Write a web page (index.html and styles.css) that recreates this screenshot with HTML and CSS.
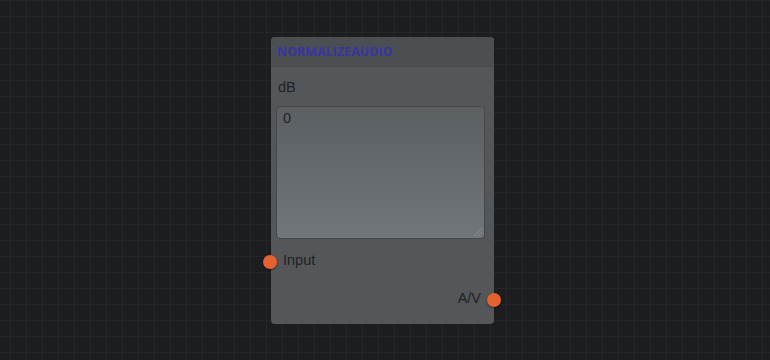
FILE: index.html
```html
<!DOCTYPE html>
<html lang="en">
<head>
  <meta charset="utf-8">
  <title>NormalizeAudio node</title>
  <link rel="stylesheet" href="styles.css">
</head>
<body>
  <div class="canvas">
    <div class="node">
      <div class="node-title">NORMALIZEAUDIO</div>
      <div class="node-body">
        <div class="control">
          <label class="control-label">dB</label>
          <div class="control-input">0</div>
        </div>
        <div class="socket-row socket-in">
          <span class="socket"></span>
          <span class="socket-name">Input</span>
        </div>
        <div class="socket-row socket-out">
          <span class="socket-name">A/V</span>
          <span class="socket"></span>
        </div>
      </div>
    </div>
  </div>
</body>
</html>
```

FILE: styles.css
```css
html, body {
  margin: 0;
  padding: 0;
  height: 100%;
}
body {
  background-color: #1c1d1f;
  font-family: 'Liberation Sans', Arial, sans-serif;
  overflow: hidden;
}
.canvas {
  position: relative;
  width: 770px;
  height: 360px;
  background-color: #1c1d1f;
  background-image:
    linear-gradient(to right, #252629 1px, transparent 1px),
    linear-gradient(to bottom, #252629 1px, transparent 1px);
  background-size: 16px 16px;
  background-position: 10px 0;
}
.node {
  position: absolute;
  left: 271px;
  top: 37px;
  width: 223px;
  height: 287px;
  background: #53575a;
  border-radius: 4px;
  display: flex;
  flex-direction: column;
}
.node-title {
  height: 30px;
  box-sizing: border-box;
  padding: 6px 6px 0;
  background: #4b4f52;
  border-radius: 4px 4px 0 0;
  border-bottom: 1px solid #474b4e;
  color: #3535a6;
  font-family: 'Open Sans', sans-serif;
  font-weight: 700;
  font-size: 12.5px;
}
.node-body {
  flex: 1;
  display: flex;
  flex-direction: column;
}
.control {
  padding: 12px 9px 0 5px;
}
.control-label {
  display: block;
  padding-left: 2px;
  font-size: 14.5px;
  line-height: 16px;
  color: #222;
}
.control-input {
  margin-top: 11px;
  height: 133px;
  box-sizing: border-box;
  padding: 3px 6px;
  border: 1px solid #44484b;
  border-radius: 4px;
  background: linear-gradient(to bottom, #5b5f62, #71767a);
  font-size: 14.5px;
  line-height: 17px;
  color: #222;
  position: relative;
}
.control-input::after {
  content: "";
  position: absolute;
  right: 2px;
  bottom: 2px;
  width: 10px;
  height: 10px;
  background: repeating-linear-gradient(135deg, transparent 0 2px, #888c90 2px 3px);
  clip-path: polygon(100% 0, 100% 100%, 0 100%);
}
.socket-row {
  display: flex;
  align-items: center;
  gap: 6px;
  font-size: 14.5px;
  color: #222;
}
.socket-in {
  margin-top: 12px;
  margin-left: -8px;
}
.socket-out {
  margin-top: 20px;
  justify-content: flex-end;
  margin-right: -7px;
}
.socket-out .socket {
  margin-top: 4px;
}
.socket-in .socket {
  margin-top: 4px;
}
.socket {
  width: 14px;
  height: 14px;
  border-radius: 50%;
  background: #e8602c;
  box-shadow: 0 1px 2px rgba(0, 0, 0, 0.45);
}
```
